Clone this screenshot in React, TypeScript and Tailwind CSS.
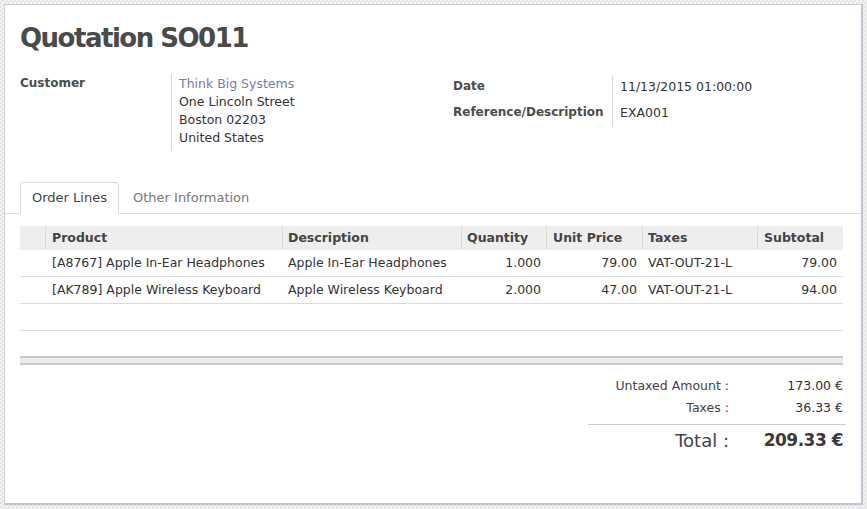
const lines = [
  {
    product: "[A8767] Apple In-Ear Headphones",
    description: "Apple In-Ear Headphones",
    qty: "1.000",
    price: "79.00",
    taxes: "VAT-OUT-21-L",
    subtotal: "79.00",
  },
  {
    product: "[AK789] Apple Wireless Keyboard",
    description: "Apple Wireless Keyboard",
    qty: "2.000",
    price: "47.00",
    taxes: "VAT-OUT-21-L",
    subtotal: "94.00",
  },
];

const font = { fontFamily: '"DejaVu Sans", "Liberation Sans", sans-serif' };

export default function App() {
  return (
    <div
      className="w-[867px] h-[509px] p-[4px] bg-[repeating-conic-gradient(#e4e4e4_0%_25%,#f4f4f4_0%_50%)] bg-[length:4px_4px] text-[#4c4c4c] text-[12.5px]"
      style={font}
    >
      <div className="h-full bg-white border border-[#cfcfd6] border-r-2 border-b-2 border-r-[#c4c2d2] border-b-[#c4c2d2] pt-[16px]">
        <div className="px-[15px]">
          <h1 className="text-[26px] font-bold leading-[34px] tracking-[-1.5px] text-[#4a4a4a]">
            Quotation SO011
          </h1>

          <div className="flex mt-[19px] h-[83px]">
            <div className="w-[433px] flex">
              <div className="w-[151px] font-bold text-[12px] leading-[18px]">Customer</div>
              <div className="border-l border-[#d6d6d6] pl-[7px] pt-[1px] pb-[4px] leading-[18px] text-[#333] self-start">
                <div className="text-[#7b7aaf]">Think Big Systems</div>
                <div>One Lincoln Street</div>
                <div>Boston 02203</div>
                <div>United States</div>
              </div>
            </div>
            <div className="flex pt-[2px]">
              <div className="w-[159px] font-bold text-[12px] leading-[26px] -mt-[3px]">
                <div>Date</div>
                <div>Reference/Description</div>
              </div>
              <div className="border-l border-[#d6d6d6] pl-[7px] h-[51px] leading-[26px] text-[#333]">
                <div className="-mt-[2px]">11/13/2015 01:00:00</div>
                <div>EXA001</div>
              </div>
            </div>
          </div>
        </div>

        <div className="mt-[25px] flex border-b border-[#dcdcdc] pl-[15px] h-[32px] text-[13px]">
          <div className="w-[99px] h-[32px] border border-[#dcdcdc] border-b-white rounded-t-[4px] flex items-center justify-center text-[#444] bg-white">
            Order Lines
          </div>
          <div className="ml-[14px] flex items-center text-[#777]">Other Information</div>
        </div>

        <div className="px-[15px] pt-[12px]">
          <div className="w-[823px]">
            <div className="flex h-[24px] bg-[#eeeeee] font-bold items-center text-[#444]">
              <div className="w-[26px] h-full border-r border-[#dadada]" />
              <div className="w-[237px] h-full px-[6px] flex items-center border-r border-[#dadada]">Product</div>
              <div className="w-[179px] h-full px-[5px] flex items-center border-r border-[#dadada]">Description</div>
              <div className="w-[85px] h-full px-[5px] flex items-center border-r border-[#dadada]">Quantity</div>
              <div className="w-[96px] h-full px-[6px] flex items-center border-r border-[#dadada]">Unit Price</div>
              <div className="w-[115px] h-full px-[5px] flex items-center border-r border-[#dadada]">Taxes</div>
              <div className="flex-1 h-full px-[6px] flex items-center">Subtotal</div>
            </div>
            {lines.map((l, i) => (
              <div key={i} className="flex h-[27px] items-center border-b border-[#dcdcdc] text-[#333] pt-[1px]">
                <div className="w-[26px]" />
                <div className="w-[237px] px-[6px] whitespace-nowrap">{l.product}</div>
                <div className="w-[179px] px-[5px] whitespace-nowrap">{l.description}</div>
                <div className="w-[85px] px-[6px] text-right">{l.qty}</div>
                <div className="w-[96px] px-[6px] text-right">{l.price}</div>
                <div className="w-[115px] px-[5px] whitespace-nowrap">{l.taxes}</div>
                <div className="flex-1 px-[6px] text-right">{l.subtotal}</div>
              </div>
            ))}
            <div className="h-[27px] border-b border-[#dcdcdc]" />
            <div className="mt-[25px] h-[9px] bg-[#ececec] border-t-2 border-b-2 border-[#c9c9c9]" />
          </div>

          <div className="flex justify-end mt-[10px]">
            <div className="w-[258px] text-[#333]">
              <div className="flex h-[22px] items-center">
                <div className="flex-1 text-right text-[#444]">Untaxed Amount :</div>
                <div className="w-[117px] text-right pr-[3px]">173.00 €</div>
              </div>
              <div className="flex h-[22px] items-center">
                <div className="flex-1 text-right text-[#444]">Taxes :</div>
                <div className="w-[117px] text-right pr-[3px]">36.33 €</div>
              </div>
              <div className="border-t border-[#cccccc] mt-[5px] flex h-[32px] items-center">
                <div className="flex-1 text-right text-[18px] text-[#444]">Total :</div>
                <div className="w-[117px] text-right pr-[3px] text-[17px] tracking-[-0.5px] font-bold text-[#3a3a3a]">209.33 €</div>
              </div>
            </div>
          </div>
        </div>
      </div>
    </div>
  );
}
